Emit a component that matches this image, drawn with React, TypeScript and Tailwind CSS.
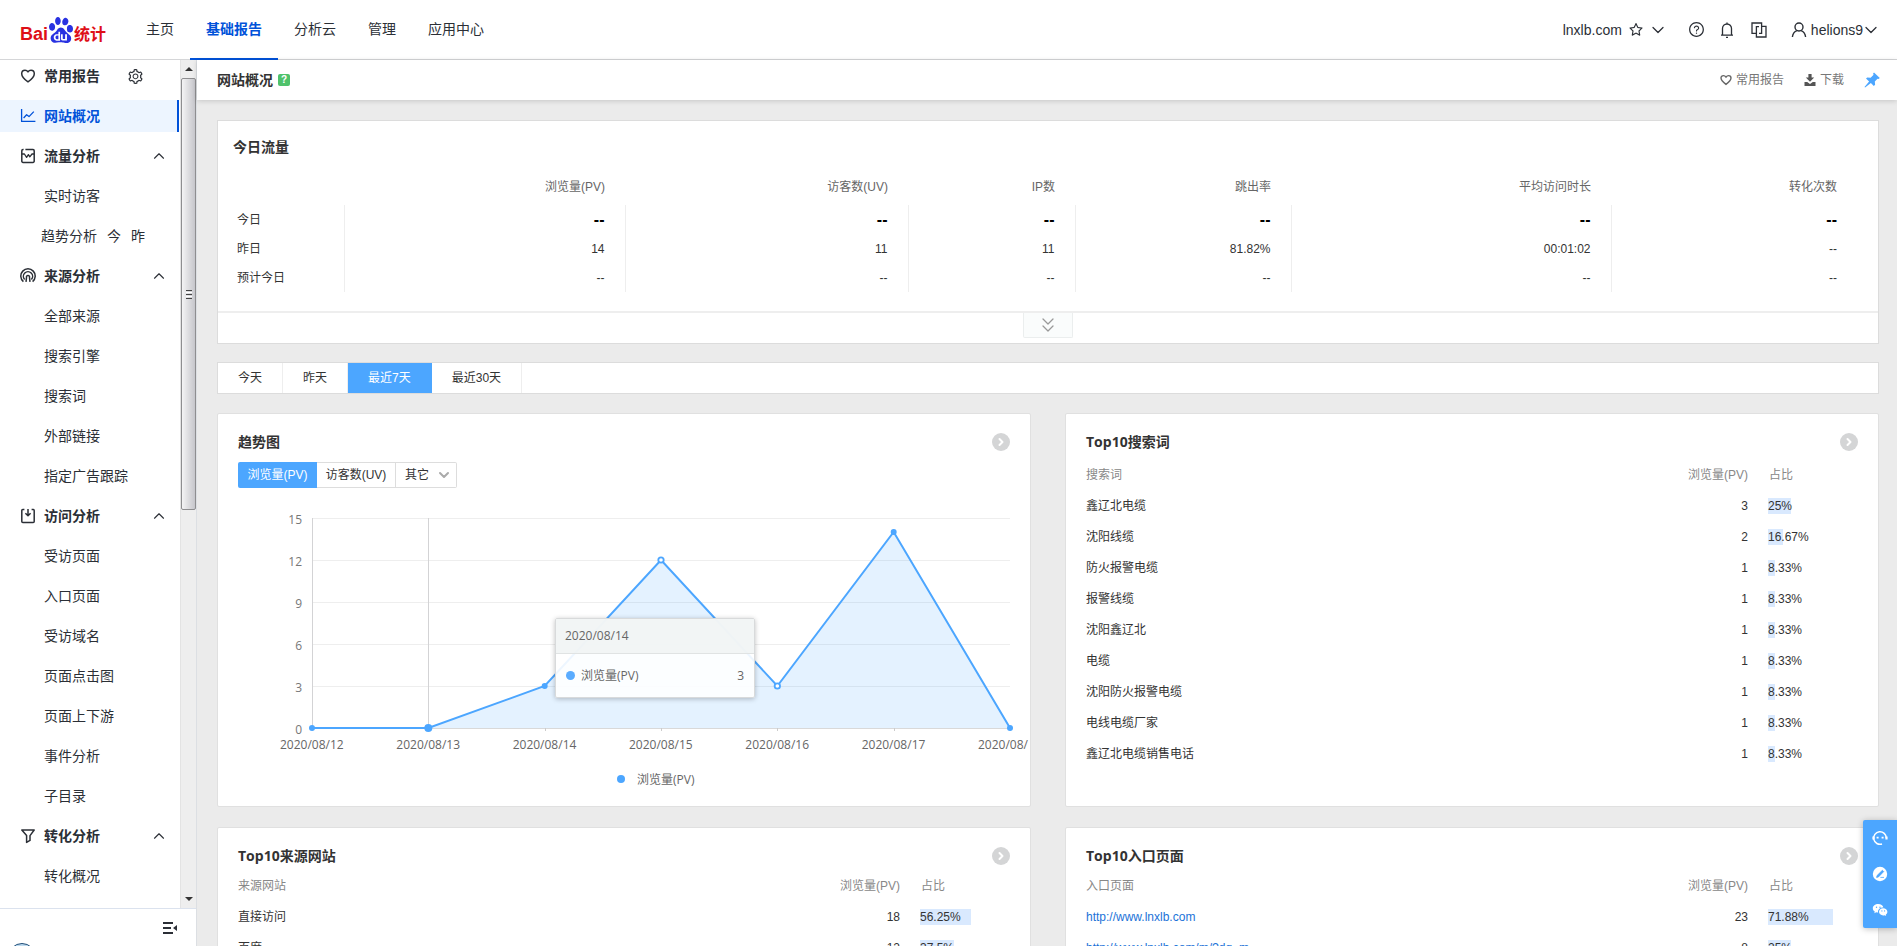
import { useState } from "react";
import type { ReactNode } from "react";
import clsx from "clsx";
import { ChevronDown, ChevronRight, ChevronUp, ChevronsDown } from "lucide-react";
import { AiOutlineQuestionCircle, AiOutlineSetting, AiOutlineStar } from "react-icons/ai";
import { SiBaidu } from "react-icons/si";

type IconName = "heart" | "chart" | "flow" | "source" | "visit" | "funnel";

type MenuItem = { label: string; shortcuts?: string[] };
type MenuGroup = { label: string; icon: IconName; items: MenuItem[] };

const navItems = ["主页", "基础报告", "分析云", "管理", "应用中心"];

const menuGroups: MenuGroup[] = [
  {
    label: "流量分析",
    icon: "flow",
    items: [{ label: "实时访客" }, { label: "趋势分析", shortcuts: ["今", "昨"] }],
  },
  {
    label: "来源分析",
    icon: "source",
    items: [
      { label: "全部来源" },
      { label: "搜索引擎" },
      { label: "搜索词" },
      { label: "外部链接" },
      { label: "指定广告跟踪" },
    ],
  },
  {
    label: "访问分析",
    icon: "visit",
    items: [
      { label: "受访页面" },
      { label: "入口页面" },
      { label: "受访域名" },
      { label: "页面点击图" },
      { label: "页面上下游" },
      { label: "事件分析" },
      { label: "子目录" },
    ],
  },
  { label: "转化分析", icon: "funnel", items: [{ label: "转化概况" }] },
];

const trafficColumns = ["浏览量(PV)", "访客数(UV)", "IP数", "跳出率", "平均访问时长", "转化次数"];

const trafficRows = [
  { label: "今日", values: ["--", "--", "--", "--", "--", "--"], strong: true },
  { label: "昨日", values: ["14", "11", "11", "81.82%", "00:01:02", "--"] },
  { label: "预计今日", values: ["--", "--", "--", "--", "--", "--"] },
];

const ranges = ["今天", "昨天", "最近7天", "最近30天"];

const trend = [
  { date: "2020/08/12", pv: 0 },
  { date: "2020/08/13", pv: 0 },
  { date: "2020/08/14", pv: 3 },
  { date: "2020/08/15", pv: 12 },
  { date: "2020/08/16", pv: 3 },
  { date: "2020/08/17", pv: 14 },
  { date: "2020/08/18", pv: 0 },
];

type RankRow = { name: string; pv: number; share: number; href?: string };

const keywords: RankRow[] = [
  { name: "鑫辽北电缆", pv: 3, share: 25 },
  { name: "沈阳线缆", pv: 2, share: 16.67 },
  { name: "防火报警电缆", pv: 1, share: 8.33 },
  { name: "报警线缆", pv: 1, share: 8.33 },
  { name: "沈阳鑫辽北", pv: 1, share: 8.33 },
  { name: "电缆", pv: 1, share: 8.33 },
  { name: "沈阳防火报警电缆", pv: 1, share: 8.33 },
  { name: "电线电缆厂家", pv: 1, share: 8.33 },
  { name: "鑫辽北电缆销售电话", pv: 1, share: 8.33 },
];

const sources: RankRow[] = [
  { name: "直接访问", pv: 18, share: 56.25 },
  { name: "百度", pv: 12, share: 37.5 },
];

const entries: RankRow[] = [
  { name: "http://www.lnxlb.com", pv: 23, share: 71.88, href: "#entry-home" },
  { name: "http://www.lnxlb.com/m/?dq=m", pv: 8, share: 25, href: "#entry-mobile" },
];

function MenuIcon({ name }: { name: IconName }) {
  return (
    <svg
      viewBox="0 0 16 16"
      className="size-4 shrink-0"
      fill="none"
      stroke="currentColor"
      strokeWidth="1.5"
      strokeLinejoin="round"
    >
      {name === "heart" && (
        <path d="M8 13.8C4.5 11.4 1.7 8.9 1.7 5.7c0-2 1.5-3.5 3.3-3.5 1.2 0 2.3.6 3 1.7.7-1.1 1.8-1.7 3-1.7 1.8 0 3.3 1.5 3.3 3.5 0 3.2-2.8 5.7-6.3 8.1z" />
      )}
      {name === "chart" && (
        <path d="M1.6 1v12.4H15.4M3.6 10l3-3.2 2.4 1.8 4.8-5" strokeWidth="1.3" />
      )}
      {name === "flow" && (
        <>
          <path d="M3.6 1.6H3a1.200 1.200 0 0 0-1.200 1.200v10.400A1.200 1.200 0 0 0 3 14.400h10a1.200 1.200 0 0 0 1.200-1.200V2.800A1.200 1.200 0 0 0 13 1.600H5.400" />
          <path d="M1.800 6h2.600l2.200 3.400 1.800-2.800 1.400 2.200L12 6h2.200" strokeWidth="1.300" />
        </>
      )}
      {name === "source" && (
        <>
          <path d="M3.4 13.6A7.2 7.2 0 1 1 12.6 13.6" />
          <path d="M4.6 11.4a4.6 4.6 0 1 1 6.8 0" />
          <path d="M6 13.8l.5-4.2a1.6 1.6 0 1 1 3 0l.5 4.2" />
        </>
      )}
      {name === "visit" && (
        <>
          <path d="M4.4 1.6H2.8a1 1 0 0 0-1 1v10.8a1 1 0 0 0 1 1h10.4a1 1 0 0 0 1-1V2.6a1 1 0 0 0-1-1h-1.6" />
          <path d="M8 1v6.4M5.4 5.2L8 7.8l2.6-2.6" />
        </>
      )}
      {name === "funnel" && <path d="M1.8 2h12.4L10 7.6v4.8l-3.4 2V7.6z" />}
    </svg>
  );
}

function Logo() {
  return (
    <a href="#home" aria-label="百度统计" className="flex w-[87px] shrink-0 items-end font-bold text-[#de0f17]">
      <span className="text-lg leading-[17px]">Bai</span>
      <SiBaidu className="h-[26px] w-[26px] shrink-0 text-[#2932e1]" />
      <span className="text-base leading-[17px] whitespace-nowrap">统计</span>
    </a>
  );
}

function Header() {
  const [active, setActive] = useState("基础报告");

  return (
    <header className="flex h-[60px] shrink-0 items-center border-b border-[#d5d6d8] bg-white pr-4 pl-5 text-sm text-[#2b2f36]">
      <Logo />
      <nav className="ml-[23px] flex h-[60px]">
        {navItems.map((item) => (
          <a
            key={item}
            href="#nav"
            onClick={() => setActive(item)}
            className={clsx(
              "flex items-center border-b-2 px-4",
              item === active ? "border-[#0052d9] font-bold text-[#0052d9]" : "border-transparent"
            )}
          >
            {item}
          </a>
        ))}
      </nav>
      <div className="ml-auto flex items-center">
        <button className="flex items-center">
          lnxlb.com
          <AiOutlineStar className="ml-1.5 size-4" />
          <ChevronDown className="ml-1 size-5" strokeWidth={1.5} />
        </button>
        <button aria-label="帮助" className="ml-5">
          <AiOutlineQuestionCircle className="size-[17px]" />
        </button>
        <button aria-label="消息" className="ml-3.5">
          <svg viewBox="0 0 16 16" className="size-4" fill="none" stroke="currentColor" strokeWidth="1.3">
            <path d="M3.5 13V6.5a4.5 4.5 0 0 1 9 0V13M2 13.2h12M8 .6V2M7 15.4h2" />
          </svg>
        </button>
        <button aria-label="切换产品" className="ml-4">
          <svg viewBox="0 0 16 16" className="size-4" fill="none" stroke="currentColor" strokeWidth="1.3">
            <path d="M5.400 11.400H1V1h9.600v3M10 4.400h5V15H5.400V4.600H8" />
            <path d="M10.600 4.400v7H8" />
          </svg>
        </button>
        <button className="ml-6 flex items-center">
          <svg viewBox="0 0 16 16" className="mr-1 size-4" fill="none" stroke="currentColor" strokeWidth="1.4">
            <circle cx="8" cy="5" r="4" />
            <path d="M1.4 15c.4-3.4 2.4-5.6 4.6-6.4M14.6 15c-.4-3.4-2.4-5.6-4.6-6.4" />
          </svg>
          helions9
          <ChevronDown className="-ml-0.5 size-5" strokeWidth={1.5} />
        </button>
      </div>
    </header>
  );
}

function Sidebar() {
  return (
    <aside className="relative flex w-[197px] shrink-0 flex-col border-r border-[#dcdfe3] bg-white text-sm text-[#2b2f36]">
      <div className="flex min-h-0 flex-1">
        <nav className="flex min-w-0 flex-1 flex-col gap-2 overflow-hidden">
          <div className="flex h-8 shrink-0 items-center pl-5 font-bold">
            <MenuIcon name="heart" />
            <span className="ml-2">常用报告</span>
            <button aria-label="设置" className="ml-[27px]">
              <AiOutlineSetting className="size-[17px]" />
            </button>
          </div>
          <a
            href="#overview"
            className="mr-px flex h-8 shrink-0 items-center border-r-2 border-[#0052d9] bg-[#edf5ff] pl-5 font-bold text-[#0052d9]"
          >
            <MenuIcon name="chart" />
            <span className="ml-2">网站概况</span>
          </a>
          {menuGroups.map((group) => (
            <div key={group.label} className="flex shrink-0 flex-col gap-2">
              <button className="flex h-8 items-center pr-3 pl-5 font-bold">
                <MenuIcon name={group.icon} />
                <span className="ml-2">{group.label}</span>
                <ChevronUp className="ml-auto size-[18px]" strokeWidth={1.5} />
              </button>
              {group.items.map((item) =>
                item.shortcuts ? (
                  <div key={item.label} className="flex h-8 items-center gap-2.5 pl-[41px]">
                    <a href="#report">{item.label}</a>
                    {item.shortcuts.map((s) => (
                      <a key={s} href="#report">
                        {s}
                      </a>
                    ))}
                  </div>
                ) : (
                  <a key={item.label} href="#report" className="flex h-8 items-center pl-11">
                    {item.label}
                  </a>
                )
              )}
            </div>
          ))}
        </nav>
        {/* scrollbar */}
        <div className="flex w-4 shrink-0 flex-col border-l border-[#e3e3e3] bg-[#eeeeee]">
          <div className="flex h-[18px] items-center justify-center">
            <svg viewBox="0 0 8 4" className="h-1 w-2">
              <path d="M0 4L4 0l4 4z" fill="#333" />
            </svg>
          </div>
          <div className="flex h-[51%] flex-col items-center justify-center gap-px rounded-xs border border-[#8e8e90] bg-linear-to-r from-[#f4f4f5] to-[#c6c6cb]">
            <span className="h-px w-1.5 bg-[#444]" />
            <span className="h-px w-1.5 bg-white" />
            <span className="h-px w-1.5 bg-[#444]" />
            <span className="h-px w-1.5 bg-white" />
            <span className="h-px w-1.5 bg-[#444]" />
          </div>
          <div className="mt-auto flex h-[18px] items-center justify-center">
            <svg viewBox="0 0 8 4" className="h-1 w-2">
              <path d="M0 0l4 4 4-4z" fill="#333" />
            </svg>
          </div>
        </div>
      </div>
      <div className="relative flex h-[38px] shrink-0 items-center justify-end overflow-hidden border-t border-[#dbe2ee] pr-[18px]">
        <span className="absolute top-[34px] left-2 size-7 rounded-full border border-[#1f4e79] bg-[#bcd9ee]" />
        <button aria-label="收起菜单">
          <svg viewBox="0 0 16 14" className="h-3.5 w-4" fill="currentColor">
            <path d="M1 1h10v2H1zM1 6h8v2H1zM1 11h10v2H1zM15 4v6l-4-3z" />
          </svg>
        </button>
      </div>
    </aside>
  );
}

function PageBar() {
  return (
    <div className="relative flex h-10 shrink-0 items-center bg-white pr-[17px] pl-5 text-xs text-[#777] shadow-[0_1px_5px_rgba(0,0,0,0.16)]">
      <h1 className="text-sm font-bold text-[#333]">网站概况</h1>
      <button
        aria-label="说明"
        className="ml-[5px] flex size-3 items-center justify-center rounded-xs bg-[#4fc26b] text-[10px] leading-3 font-bold text-white"
      >
        ?
      </button>
      <button className="ml-auto flex items-center">
        <svg viewBox="0 0 12 12" className="mr-1 size-3" fill="none" stroke="#666" strokeWidth="1.4">
          <path d="M6 10.4C3.400 8.500 1 6.500 1 4.100c0-1.500 1.100-2.500 2.400-2.500 1.100 0 2 .6 2.600 1.500.6-.9 1.500-1.500 2.600-1.500C9.900 1.600 11 2.600 11 4.100c0 2.400-2.400 4.400-5 6.300z" />
        </svg>
        常用报告
      </button>
      <button className="ml-5 flex items-center">
        <svg viewBox="0 0 12 12" className="mr-1 size-3" fill="#555">
          <path d="M4.400 0h3.200v3.600h2.600L6 7.800 1.800 3.600h2.600zM.5 8h2.700l2.800 2 2.800-2h2.700v4H.5z" />
        </svg>
        下载
      </button>
      <button aria-label="固定" className="ml-5">
        <svg viewBox="0 0 16 16" className="size-4" fill="#4ca6ff">
          <path d="M10 .4l5.800 5.600-1.300 1-1-.3-2.700 2.900.3 3.200-1.300 1.100-2.900-2.900-5.800 4.600-.6-.6 4.600-5.600L2 6.600l1.300-1.200 3.300.3 3-3-.6-1z" />
        </svg>
      </button>
    </div>
  );
}

function TodayTraffic() {
  return (
    <section className="border border-[#dcdcdc] bg-white">
      <h2 className="px-[15px] pt-4 text-sm leading-5 font-bold text-[#333]">今日流量</h2>
      <div className="pt-3 pr-[21px] pb-[19px] pl-[15px]">
        <table className="w-full table-fixed text-xs text-[#333]">
          <colgroup>
            <col className="w-[111px]" />
            <col className="w-[281px]" />
            <col className="w-[283px]" />
            <col className="w-[167px]" />
            <col className="w-[216px]" />
            <col className="w-[320px]" />
            <col className="w-[246px]" />
          </colgroup>
          <thead>
            <tr className="h-9 text-[#666]">
              <td />
              {trafficColumns.map((c) => (
                <th key={c} scope="col" className="pr-5 text-right font-normal">
                  {c}
                </th>
              ))}
            </tr>
          </thead>
          <tbody>
            {trafficRows.map((row) => (
              <tr key={row.label} className="h-[29px]">
                <th scope="row" className="border-r border-[#eee] pl-1 text-left font-normal">
                  {row.label}
                </th>
                {row.values.map((v, i) => (
                  <td
                    key={trafficColumns[i]}
                    className={clsx(
                      "border-[#eee] pr-5 text-right not-last:border-r",
                      row.strong && "text-base leading-5 font-bold text-black"
                    )}
                  >
                    {v}
                  </td>
                ))}
              </tr>
            ))}
          </tbody>
        </table>
      </div>
      <div className="flex h-8 justify-center border-t-2 border-[#eee]">
        <button
          aria-label="展开"
          className="flex h-[25px] w-[50px] items-center justify-center rounded-b-xs border border-t-0 border-[#ebeeee] bg-[#fafcfc] text-[#999]"
        >
          <ChevronsDown className="size-6" strokeWidth={1.25} />
        </button>
      </div>
    </section>
  );
}

function RangeTabs() {
  const [range, setRange] = useState("最近7天");

  return (
    <div className="mt-[18px] flex h-8 border border-[#dcdcdc] bg-white text-xs text-[#333]">
      {ranges.map((r) => (
        <button
          key={r}
          onClick={() => setRange(r)}
          className={clsx(
            "border-r px-5",
            r === range ? "border-[#4ca6ff] bg-[#4ca6ff] text-white" : "border-[#eee]"
          )}
        >
          {r}
        </button>
      ))}
    </div>
  );
}

function Panel({ title, children }: { title: string; children: ReactNode }) {
  return (
    <section className="min-w-0 rounded-xs border border-[#e0e0e0] bg-white pt-4">
      <div className="flex h-6 items-center justify-between px-5">
        <h2 className="font-['Open_Sans','Noto_Sans_CJK_SC',sans-serif] text-sm font-bold text-[#333]">
          {title}
        </h2>
        <button
          aria-label="查看更多"
          className="flex size-[18px] items-center justify-center rounded-full bg-[#d4d5d6] text-white"
        >
          <ChevronRight className="size-3" strokeWidth={4} />
        </button>
      </div>
      {children}
    </section>
  );
}

function TrendChart() {
  const left = 74;
  const right = 772;
  const bottom = 240;
  const step = (right - left) / (trend.length - 1);
  const points = trend.map((d, i) => ({ ...d, x: left + step * i, y: bottom - d.pv * 14 }));
  const line = points.map((p) => `${p.x},${p.y}`).join(" ");

  return (
    <div className="relative pl-5 font-['Open_Sans','Noto_Sans_CJK_SC',sans-serif] text-xs">
      <svg viewBox="0 0 792 318" className="w-full" role="img" aria-label="浏览量趋势">
        {[0, 3, 6, 9, 12, 15].map((v) => (
          <g key={v}>
            <path
              d={`M${left} ${bottom - v * 14 + 0.5}H${right}`}
              stroke={v === 0 ? "#d9d9d9" : "#eeeeee"}
            />
            <text x={left - 10} y={bottom - v * 14 + 6} textAnchor="end" fill="#777">
              {v}
            </text>
          </g>
        ))}
        <path d="M74.500 30v211M190.500 30v210" stroke="#d3d3d5" />
        {points.map((p, i) => (
          <g key={p.date}>
            <path d={`M${Math.round(p.x) + 0.5} ${bottom}v3`} stroke="#ccc" />
            {/* the last label has no room for the day */}
            <text x={p.x - 32} y={bottom + 21} fill="#666">
              {i === points.length - 1 ? p.date.slice(0, 8) : p.date}
            </text>
          </g>
        ))}
        <polygon points={`${line} ${right},${bottom}`} fill="#4ca6ff" fillOpacity="0.15" />
        <polyline points={line} fill="none" stroke="#4ca6ff" strokeWidth="2" />
        {points.map((p, i) =>
          i === 3 || i === 4 ? (
            <circle key={p.date} cx={p.x} cy={p.y} r="2.700" fill="#fff" stroke="#4ca6ff" strokeWidth="1.800" />
          ) : (
            <circle key={p.date} cx={p.x} cy={p.y} r={i === 1 ? 4 : 3} fill="#4ca6ff" />
          )
        )}
        <circle cx="383" cy="291" r="4" fill="#4ca6ff" />
        <text x="399" y="296" fill="#666">
          浏览量(PV)
        </text>
      </svg>
      <div className="absolute top-[130px] left-[337px] w-[200px] rounded-xs border border-[#d8dadb] bg-white/90 text-[#666] shadow-[0_1px_5px_rgba(0,0,0,0.25)]">
        <div className="border-b border-[#e0e3e3] bg-[#eff2f2]/80 px-[9px] leading-[34px]">2020/08/14</div>
        <div className="flex h-[43px] items-center px-2.5">
          <span className="mr-1.5 size-[9px] rounded-full bg-[#5aacff]" />
          浏览量(PV)
          <span className="ml-auto">3</span>
        </div>
      </div>
    </div>
  );
}

function TrendPanel() {
  return (
    <Panel title="趋势图">
      <div className="mt-2 flex h-[26px] pl-5 text-xs text-[#333]">
        <button className="w-[79px] rounded-l-xs bg-[#4ca6ff] text-white">浏览量(PV)</button>
        <button className="w-[79px] border-y border-r border-[#ddd]">访客数(UV)</button>
        <label className="relative flex w-[61px] items-center rounded-r-xs border border-l-0 border-[#ddd]">
          <select aria-label="其它指标" className="h-full w-full appearance-none bg-transparent pl-[9px] outline-none">
            <option>其它</option>
            <option>IP数</option>
            <option>跳出率</option>
          </select>
          <ChevronDown className="pointer-events-none absolute right-1 size-4 text-[#aaa]" strokeWidth={3} />
        </label>
      </div>
      <TrendChart />
    </Panel>
  );
}

function RankTable({ head, rows, className }: { head: string; rows: RankRow[]; className: string }) {
  return (
    <div className={clsx("px-5", className)}>
      <table className="w-full table-fixed text-xs text-[#333]">
        <thead>
          <tr className="h-[31px] text-[#888]">
            <th scope="col" className="text-left font-normal">
              {head}
            </th>
            <th scope="col" className="w-[100px] text-right font-normal">
              浏览量(PV)
            </th>
            <th scope="col" className="w-[110px] pl-[21px] text-left font-normal">
              占比
            </th>
          </tr>
        </thead>
        <tbody>
          {rows.map((row) => (
            <tr key={row.name} className="h-[31px]">
              <td className="truncate">
                {row.href ? (
                  <a href={row.href} className="text-[#1b72d8]">
                    {row.name}
                  </a>
                ) : (
                  row.name
                )}
              </td>
              <td className="text-right">{row.pv}</td>
              <td className="pl-5">
                <div className="relative h-4">
                  <div className="absolute inset-y-0 left-0 bg-[#d9e9fe]" style={{ width: `${row.share}%` }} />
                  <span className="relative block leading-4">{row.share}%</span>
                </div>
              </td>
            </tr>
          ))}
        </tbody>
      </table>
    </div>
  );
}

function ContactDock() {
  return (
    <div className="fixed right-0 bottom-[18px] flex w-[34px] flex-col rounded-l-xs bg-[#4ca6ff] text-white shadow-[0_1px_6px_rgba(0,0,0,0.25)]">
      <button aria-label="客服" className="flex h-9 items-center justify-center">
        <svg viewBox="0 0 16 16" className="size-4" fill="none" stroke="currentColor" strokeWidth="1.5">
          <path d="M10 14A6.300 6.300 0 1 1 14.300 8" />
          <path d="M1.500 6.600v3M14.500 6.600v3" strokeWidth="2.200" />
          <path d="M4.600 7.600h2M9.600 7.600h2" strokeWidth="1.800" />
        </svg>
      </button>
      <button aria-label="反馈" className="flex h-9 items-center justify-center">
        <svg viewBox="0 0 16 16" className="size-4">
          <circle cx="8" cy="8" r="7.200" fill="currentColor" />
          <path d="M4.600 11.400l.5-1.900 5.300-5.200 1.300 1.300-5.200 5.300zM8.400 11.400H12" fill="#4ca6ff" stroke="#4ca6ff" strokeWidth="0.800" />
        </svg>
      </button>
      <button aria-label="微信" className="flex h-9 items-center justify-center">
        <svg viewBox="0 0 16 16" className="size-4" fill="currentColor">
          <path d="M6.200 2C3.200 2 .8 3.900.8 6.300c0 1.400.8 2.500 2 3.300l-.5 1.600 1.900-1c.6.2 1.200.3 1.900.3-.5-3 2-5.200 5.300-5C11 3.400 8.800 2 6.200 2z" />
          <path d="M15.400 9.800c0-2-1.900-3.600-4.200-3.600S7 7.800 7 9.800s1.900 3.600 4.200 3.600c.5 0 1-.1 1.500-.2l1.500.8-.4-1.300c1-.7 1.600-1.700 1.600-2.900z" />
          <g fill="#4ca6ff">
            <circle cx="4.500" cy="5.200" r=".7" />
            <circle cx="8" cy="5.200" r=".7" />
            <circle cx="9.900" cy="8.900" r=".6" />
            <circle cx="12.600" cy="8.900" r=".6" />
          </g>
        </svg>
      </button>
    </div>
  );
}

export default function App() {
  return (
    <div className="flex h-screen flex-col overflow-hidden bg-[#ebebeb] font-['Liberation_Sans','Noto_Sans_CJK_SC',sans-serif]">
      <Header />
      <div className="flex min-h-0 flex-1">
        <Sidebar />
        <main className="flex min-w-0 flex-1 flex-col">
          <PageBar />
          <div className="min-h-0 flex-1 overflow-hidden pt-5 pr-[18px] pl-5">
            <TodayTraffic />
            <RangeTabs />
            <div className="mt-[19px] grid grid-cols-2 gap-x-[34px] gap-y-5">
              <TrendPanel />
              <Panel title="Top10搜索词">
                <RankTable head="搜索词" rows={keywords} className="mt-[5px]" />
              </Panel>
              <Panel title="Top10来源网站">
                <RankTable head="来源网站" rows={sources} className="mt-0.5 pb-5" />
              </Panel>
              <Panel title="Top10入口页面">
                <RankTable head="入口页面" rows={entries} className="mt-0.5 pb-5" />
              </Panel>
            </div>
          </div>
        </main>
      </div>
      <ContactDock />
    </div>
  );
}
